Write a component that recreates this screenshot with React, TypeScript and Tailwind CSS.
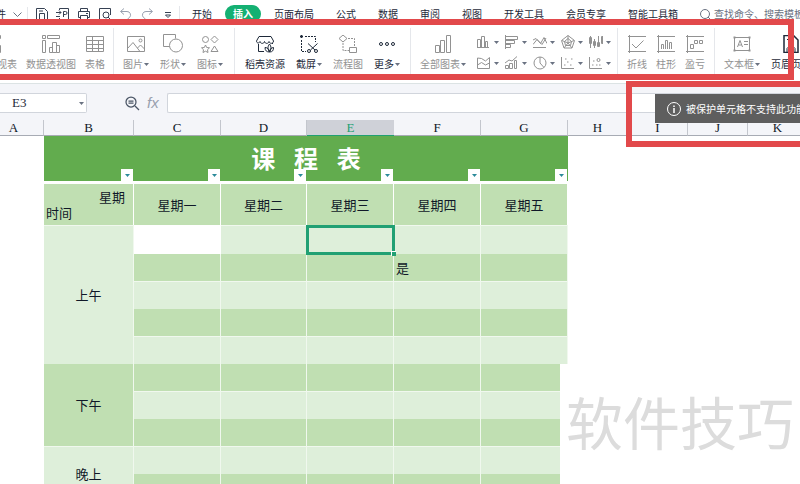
import type { ReactNode } from "react";

const TABS = ["页面布局", "公式", "数据", "审阅", "视图", "开发工具", "会员专享", "智能工具箱"];
const COLUMNS = ["A", "B", "C", "D", "E", "F", "G", "H", "I", "J", "K"];
const DAYS = ["星期一", "星期二", "星期三", "星期四", "星期五"];

const ROWS: { part?: string; span?: number; light: boolean }[] = [
  { part: "上午", span: 5, light: true },
  { light: false },
  { light: true },
  { light: false },
  { light: true },
  { part: "下午", span: 3, light: false },
  { light: true },
  { light: false },
  { part: "晚上", span: 2, light: true },
  { light: false },
];

function Icon({ size = 18, className = "", children }: { size?: number; className?: string; children: ReactNode }) {
  return (
    <svg
      width={size}
      height={size}
      viewBox={`0 0 ${size} ${size}`}
      fill="none"
      stroke="currentColor"
      strokeWidth="1"
      className={`shrink-0 ${className}`}
      aria-hidden="true"
    >
      {children}
    </svg>
  );
}

function Caret({ className = "text-gray-500" }: { className?: string }) {
  return (
    <svg width="5" height="3" viewBox="0 0 5 3" fill="currentColor" className={`shrink-0 ${className}`} aria-hidden="true">
      <path d="M0 0h5L2.5 3z" />
    </svg>
  );
}

const QUICK: { name: string; dim?: boolean; icon: ReactNode }[] = [
  { name: "保存", icon: <><path d="M1.5 12.5v-11h8l3 3v8z" /><path d="M4.5 12.5v-6h5v6M4 4h4" /></> },
  { name: "输出为PDF", icon: <><path d="M3.5 3V1.5h9v11h-9V11" /><path d="M0 5.5h5M3 3.5l2 2-2 2M7.5 10V4.5h2a1.5 1.5 0 0 1 0 3h-2M0 9.5h4" /></> },
  { name: "打印", icon: <><path d="M3.5 4V1.5h7V4M3.5 10.5h-2v-6h11v6h-2" /><path d="M3.5 8.5h7v4h-7zM9 6.5h2" /></> },
  { name: "打印预览", icon: <><path d="M4 12.5H1.5v-11h11V8" /><circle cx="8" cy="8" r="3" /><path d="M10 10l3 3" /></> },
  { name: "撤销", dim: true, icon: <path d="M5 1.5L1.5 4.5 5 7.5M2 4.5h6a3.5 3.5 0 0 1 2.5 6L8.5 12" /> },
  { name: "恢复", dim: true, icon: <path d="M9 1.5l3.5 3L9 7.5M12 4.5H6a3.5 3.5 0 0 0-2.5 6L5.5 12" /> },
  { name: "自定义快速访问工具栏", icon: <><path d="M4 5.5h6" /><path d="M4.5 8h5L7 10.5z" /></> },
];

const PIVOT = (
  <Icon>
    <path d="M.5.5h3v3h-3zM5.5.5h12v3h-12zM.5 5.5h3v12h-3z" />
    <path d="M7.5 12.5h3v5h-3zM10.5 7.5h4v10h-4zM14.5 10.5h3v7h-3z" />
  </Icon>
);

type Tool = { name: string; active?: boolean; caret?: boolean; icon: ReactNode };

const TABLES: Tool[] = [
  { name: "数据透视表", icon: PIVOT },
  { name: "数据透视图", icon: PIVOT },
  { name: "表格", icon: <Icon><path d="M.5 1.5h17v15H.5zM.5 5.5h17M.5 9.5h17M.5 13.5h17M6.5 1.5v15M12.5 5.5v11" /></Icon> },
];

const PICTURES: Tool[] = [
  { name: "图片", caret: true, icon: <Icon><path d="M.5 1.5h17v15H.5zM.5 13.5l5.5-6 7 9M10.5 13l3-3 4 4" /><circle cx="13.5" cy="5.5" r="1.5" /></Icon> },
  { name: "形状", caret: true, icon: <Icon size={20}><path d="M6.5 12.5h-6v-12h12v4" /><circle cx="13" cy="11.5" r="6.5" /></Icon> },
  {
    name: "图标",
    caret: true,
    icon: (
      <Icon>
        <circle cx="4.5" cy="4.5" r="3" />
        <path d="M13.5 1l3.5 3.5L13.5 8 10 4.500zM13.5 11l3.5 5.5h-7z" />
        <path d="M4.5 10l1.2 2.5 2.8.3-2 1.9.5 2.8-2.500-1.3L2 17.5l.5-2.8-2-1.9 2.8-.3z" />
      </Icon>
    ),
  },
];

const MORE: Tool[] = [
  {
    name: "稻壳资源",
    active: true,
    icon: (
      <Icon>
        <path d="M3 1.5h12l2.500 4.500c0 3-4 3-4.500.5-.5 2.500-4 2.500-4.500 0-.5 2.500-4 2.500-4.500 0-.5 2-3.500 2-3.500-.5z" />
        <path d="M2.500 9v7.500H8M16.500 8v1" />
        <path d="M13.500 9c-2 2.500-2 5 0 8 2-3 2-5.500 0-8zM13.500 17c-.5-3-2-4.500-4.500-4.500 0 3 1.500 4.500 4.500 4.500zM13.500 17c.5-3 2-4.500 4-4.500 0 3-1 4.500-4 4.500z" />
      </Icon>
    ),
  },
  {
    name: "截屏",
    active: true,
    caret: true,
    icon: (
      <Icon>
        <path d="M0 1.500h3M1.500 0v3" strokeWidth="1.500" />
        <path d="M5 1.500h10.500V7M1.500 5v11.500H6" strokeDasharray="2 1" />
        <path d="M8 8.500l7 6.500M17.500 8.500l-7 6.500" />
        <circle cx="9" cy="16" r="1.500" />
        <circle cx="16" cy="16" r="1.500" />
      </Icon>
    ),
  },
  { name: "流程图", icon: <Icon><path d="M4 0l4 3.500L4 7 0 3.500zM10.500 12.500h7v5h-7z" /><path d="M9 3.500h6.500V12M4 8v7.500h6" strokeDasharray="2 1" /></Icon> },
  { name: "更多", active: true, caret: true, icon: <Icon><circle cx="3" cy="9" r="1.500" /><circle cx="9" cy="9" r="1.500" /><circle cx="15" cy="9" r="1.500" /></Icon> },
];

const CHARTS: Tool[] = [
  { name: "全部图表", caret: true, icon: <Icon><path d="M1.500 10.500h4v7h-4zM6.500 5.500h4v12h-4zM12.500.500h4v17h-4z" /></Icon> },
];

const SMALL_CHARTS: { name: string; icon: ReactNode }[] = [
  { name: "柱形图", icon: <path d="M.5 4.500h3v8h-3zM4.500 1.500h3v11h-3zM8.500 6.500h2v6h-2zM0 12.500h12" /> },
  { name: "条形图", icon: <path d="M.5 0v14M.5 1.500h12v3H.5M.5 5.500h9v3H.5M.5 9.500h5v3H.5" /> },
  { name: "折线图", icon: <><path d="M0 9.500l4-5 3.500 4 3.500-6 3 6" /><path d="M0 5l3-1.500 6 6L13 3M0 12.500h13" /></> },
  { name: "雷达图", icon: <path d="M7 .5l6.500 5L11 13H3L.5 5.500zM7 3.500l3.500 3L9.500 10.500h-5L3.500 6.500zM7 .5V8M7 8l6-2.500M7 8L1 5.500M7 8l4 5M7 8l-4 5" /> },
  { name: "股价图", icon: <path d="M1.500 1v12M5.500 4v9M9.500 1v10M13.500 1v8M.5 2.500h2v6h-2zM4.500 6.500h2v4h-2zM8.500 7.500h2v4h-2zM12.500 1.500h1v7h-1z" /> },
  { name: "面积图", icon: <path d="M.5 2v10.500h12V1.500L8.500 5 4.500 2.500zM.5 9l4-2.500 4 2.500 4-2" /> },
  { name: "组合图", icon: <path d="M.5 9.500h3v3h-3zM4.500 7.500h3v5h-3zM9.500 4.500h2v8h-2zM0 7l4-3 3 1 5-4.500" /> },
  { name: "饼图", icon: <><circle cx="7" cy="7" r="6" /><path d="M7 1v6l4 4.500" /></> },
  { name: "散点图", icon: <><path d="M.5 1v11.500H13" /><path d="M3 9h1.500M6 6h1.500M9 9h1.500M10 3h1.500M4 3h1.500" /></> },
  { name: "气泡图", icon: <><path d="M.5 1v11.500H13" /><circle cx="9.500" cy="4" r="1.500" /><path d="M3 9h1.500M4 5h1.500M7 9h1.500M10 9h1.500" /></> },
];

const SPARKLINES: Tool[] = [
  { name: "折线", icon: <Icon><path d="M0 1.500h18M0 16.500h18M1.500 0v18M4 9l4 4 7.500-7.500" /></Icon> },
  { name: "柱形", icon: <Icon><path d="M0 1.500h18M0 16.500h18M1.500 0v18M4.500 14V9.500h2V14M8.500 14V5.500h2V14M12.500 14V7.500h2V14" /></Icon> },
  { name: "盈亏", icon: <Icon><path d="M0 1.500h18M0 16.500h18M1.500 0v18M4.500 9.500h3v4h-3zM8.500 5.500h3v3h-3zM13.500 5.500h3v3h-3z" /></Icon> },
];

const TEXTS: Tool[] = [
  {
    name: "文本框",
    caret: true,
    icon: (
      <Icon>
        <path d="M1.500 2.500h15v13h-15z" />
        <path d="M4.500 12L7 5.500 9.500 12M5.500 10h3M11 6.500h4M11 9.500h4" />
        <path d="M.5 1.500h2v2h-2zM15.500 1.500h2v2h-2zM.5 14.500h2v2h-2zM15.500 14.500h2v2h-2z" fill="currentColor" stroke="none" />
      </Icon>
    ),
  },
  {
    name: "页眉页脚",
    active: true,
    icon: <Icon><path d="M2 17.500V.500h9.500l4.500 4.500v12.500z" strokeWidth="1.500" /><path d="M5 4.500h6M5 17v-3.500l2-2h4l2 2V17" /></Icon>,
  },
];

function ToolButton({ tool }: { tool: Tool }) {
  return (
    <button type="button" className={tool.active ? "flex shrink-0 flex-col items-center gap-[3px] text-gray-800" : "flex shrink-0 flex-col items-center gap-[3px] text-[#929292]"}>
      <span className="flex h-[18px] items-center">{tool.icon}</span>
      <span className="flex items-center gap-px text-[10px] leading-4 whitespace-nowrap">
        {tool.name}
        {tool.caret && <Caret />}
      </span>
    </button>
  );
}

function ToolGroup({ tools, className, children }: { tools: Tool[]; className: string; children?: ReactNode }) {
  return (
    <div className={`flex shrink-0 border-r border-gray-200 pt-[7px] ${className}`}>
      {tools.map((tool) => (
        <ToolButton key={tool.name} tool={tool} />
      ))}
      {children}
    </div>
  );
}

function MenuBar() {
  return (
    <nav className="flex h-7 items-center overflow-hidden text-[10px] leading-4 whitespace-nowrap text-gray-800">
      <button type="button" className="-ml-[14px] flex shrink-0 items-center gap-[7px] pr-[5px]">
        文件
        <Icon size={9} className="text-gray-500"><path d="M.5 2.500l4 4 4-4" /></Icon>
      </button>
      <div className="flex shrink-0 gap-[7px] border-l border-gray-200 pl-[7px]">
        {QUICK.map((item) => (
          <button key={item.name} type="button" aria-label={item.name} className={item.dim ? "text-gray-400" : "text-gray-700"}>
            <Icon size={14}>{item.icon}</Icon>
          </button>
        ))}
      </div>
      <button type="button" className="ml-1 shrink-0 border-l border-gray-200 pl-3">开始</button>
      <button type="button" className="mx-[13px] h-[18px] shrink-0 rounded-full bg-[#14b072] px-2 font-bold text-white">插入</button>
      <div className="flex shrink-0 gap-[22px]">
        {TABS.map((tab) => (
          <button key={tab} type="button">{tab}</button>
        ))}
      </div>
      <label className="ml-[22px] flex min-w-[120px] flex-1 items-center gap-[3px] text-gray-500">
        <Icon size={11}><circle cx="5" cy="5" r="4.500" /><path d="M8 8l2.500 2.500" /></Icon>
        <input type="text" aria-label="搜索" placeholder="查找命令、搜索模板" className="min-w-0 flex-1 outline-none placeholder:text-gray-500" />
      </label>
    </nav>
  );
}

function Ribbon() {
  return (
    <div className="flex h-14 overflow-hidden border-b border-[#dce3e4] pb-2">
      <ToolGroup tools={TABLES} className="-ml-[33px] gap-[9px] pr-2" />
      <ToolGroup tools={PICTURES} className="gap-[11px] pr-[11px] pl-[9px]" />
      <ToolGroup tools={MORE} className="gap-[11px] px-[10px]" />
      <ToolGroup tools={CHARTS} className="gap-[11px] pl-[9px]">
        <div className="grid grid-cols-5 content-start gap-y-[7px]">
          {SMALL_CHARTS.map((chart) => (
            <button key={chart.name} type="button" aria-label={chart.name} className="flex w-7 items-center gap-[3px] text-[#929292]">
              <Icon size={14}>{chart.icon}</Icon>
              <Caret />
            </button>
          ))}
        </div>
      </ToolGroup>
      <ToolGroup tools={SPARKLINES} className="gap-[9px] px-[9px]" />
      <ToolGroup tools={TEXTS} className="gap-[11px] pl-[9px]" />
    </div>
  );
}

function FormulaBar() {
  return (
    <div className="flex items-center bg-[#f4f5f9] pt-[9px] pb-[7px]">
      <label className="flex h-5 w-[87px] items-center rounded-r-xs border border-l-0 border-gray-300 bg-white pr-[2px]">
        <input type="text" aria-label="名称框" defaultValue="E3" className="min-w-0 flex-1 pl-3 font-['Liberation_Serif',serif] text-[13px] leading-4 text-gray-800 outline-none" />
        <Caret />
      </label>
      <button type="button" aria-label="缩小" className="ml-[38px] text-gray-600">
        <Icon size={15}><circle cx="6" cy="6" r="5" strokeWidth="1.250" /><path d="M3.500 5h5M3.500 7h5M10 10l4 4" strokeWidth="1.250" /></Icon>
      </button>
      <button type="button" aria-label="插入函数" className="ml-[7px] w-5 text-left font-['Liberation_Sans',sans-serif] text-[15px] leading-4 text-gray-400 italic">fx</button>
      <input type="text" aria-label="编辑栏" className="h-5 flex-1 rounded-l-xs border border-r-0 border-gray-300 bg-white outline-none" />
    </div>
  );
}

function FilterButton({ column }: { column: string }) {
  return (
    <button type="button" aria-label={`筛选 ${column}`} className="mr-px flex size-3 items-center justify-center justify-self-end bg-white">
      <Caret className="text-[#2b8a9a]" />
    </button>
  );
}

function Sheet() {
  return (
    <table className="-ml-4 w-[824px] table-fixed border-separate border-spacing-0 text-[13px] leading-4 text-gray-900">
      <colgroup>
        <col className="w-[60px]" />
        <col className="w-[90px]" />
        <col className="w-[87px]" />
        <col className="w-[86px]" />
        <col className="w-[87px]" />
        <col className="w-[87px]" />
        <col className="w-[87px]" />
        <col className="w-[60px]" />
        <col className="w-[60px]" />
        <col className="w-[60px]" />
        <col className="w-[60px]" />
      </colgroup>
      <thead>
        <tr className="bg-[#f4f5f9] font-['Liberation_Serif',serif]">
          {COLUMNS.map((column) => (
            <th
              key={column}
              scope="col"
              className={
                column === "E"
                  ? "h-4 border-b border-[#21a073] bg-[#cfd1d8] p-0 leading-[15px] font-normal text-[#21a073]"
                  : "h-4 border-r border-b border-r-[#c3c6cd] border-b-[#a7abb4] p-0 leading-[15px] font-normal"
              }
            >
              {column}
            </th>
          ))}
        </tr>
      </thead>
      <tbody>
        <tr>
          <td />
          <th colSpan={6} className="relative h-12 border-b-3 border-white bg-[#62ac4e] p-0 font-['Open_Sans','Noto_Sans_CJK_SC',sans-serif] text-[24px] leading-[45px] font-bold whitespace-pre text-white">
            课   程   表
            <div className="absolute inset-x-0 bottom-0 grid grid-cols-[90px_87px_86px_87px_87px_87px]">
              {COLUMNS.slice(1, 7).map((column) => (
                <FilterButton key={column} column={column} />
              ))}
            </div>
          </th>
        </tr>
        <tr className="h-[41px]">
          <td />
          <th className="border-r border-white bg-[#c0dfb2] p-0 font-normal">
            <div className="pr-2 text-right">星期</div>
            <div className="pl-[2px] text-left">时间</div>
          </th>
          {DAYS.map((day) => (
            <th key={day} scope="col" className="border-r border-white bg-[#c0dfb2] p-0 font-normal">{day}</th>
          ))}
        </tr>
        {ROWS.map((row, r) => (
          <tr key={r} className={r === 0 ? "h-[29px]" : row.light ? "h-7" : "h-[27px]"}>
            <td />
            {row.part && (
              <th
                rowSpan={row.span}
                scope="rowgroup"
                className={row.light ? "border-t border-r border-[#f0f8ee] bg-[#deefda] p-0 font-normal" : "border-r border-[#f0f8ee] bg-[#c0dfb2] p-0 font-normal"}
              >
                {row.part}
              </th>
            )}
            {DAYS.map((day, c) => {
              if (r === 0 && c === 0) return <td key={day} className="bg-white p-0" />;
              return (
                <td
                  key={day}
                  className={row.light ? "relative border-t border-r border-[#f0f8ee] bg-[#deefda] p-0" : "border-r border-[#f0f8ee] bg-[#c0dfb2] p-0 pl-[2px]"}
                >
                  {r === 1 && c === 3 && "是"}
                  {r === 0 && c === 2 && (
                    <div className="absolute -inset-y-px -right-[2px] -left-px z-10 border-[3px] border-[#21a073]">
                      <span className="absolute -right-1 -bottom-1 size-[5px] border-t border-l border-white bg-[#21a073]" />
                    </div>
                  )}
                </td>
              );
            })}
          </tr>
        ))}
      </tbody>
    </table>
  );
}

export default function App() {
  return (
    <div className="relative h-screen overflow-hidden bg-white font-['Noto_Sans_CJK_SC',sans-serif]">
      <MenuBar />
      <Ribbon />
      <FormulaBar />
      <Sheet />

      <div className="absolute top-[364px] right-0 left-[560px] h-[120px] overflow-hidden bg-white pt-[26px] pl-[6px] text-[57px] leading-[60px] whitespace-nowrap text-[#dcdcdc]">
        软件技巧
      </div>

      <div role="alert" className="absolute top-[94px] right-0 left-[655px] flex h-[29px] items-center gap-[5px] overflow-hidden bg-[#5e5e5e] pl-3 text-[10px] leading-4 whitespace-nowrap text-white">
        <Icon size={14}><circle cx="7" cy="7" r="6.500" /><path d="M7 6v5M7 3.500V5" strokeWidth="1.500" /></Icon>
        被保护单元格不支持此功能
      </div>

      <div className="pointer-events-none absolute top-[19px] right-[6px] -left-2 h-[61px] border-6 border-[#e2494b]" />
      <div className="pointer-events-none absolute top-[81px] -right-2 left-[626px] h-[66px] border-6 border-[#e2494b]" />
    </div>
  );
}
